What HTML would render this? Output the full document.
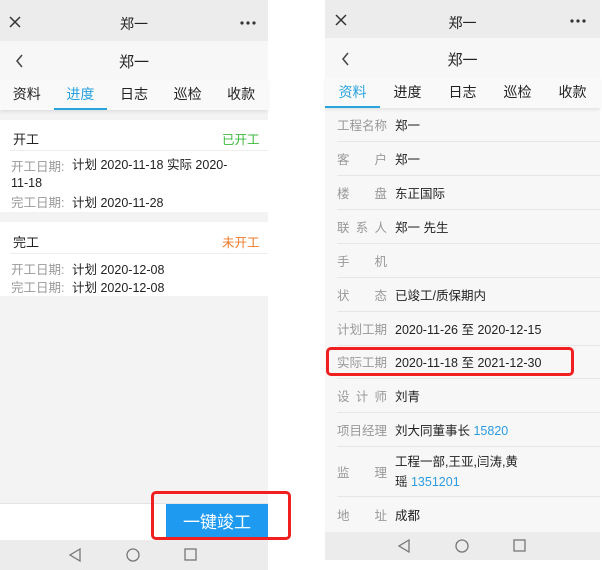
<!DOCTYPE html>
<html><head><meta charset="utf-8"><style>
*{margin:0;padding:0;box-sizing:border-box}
body{width:602px;height:570px;background:#fff;font-family:"Liberation Sans","Noto Sans CJK SC",sans-serif;position:relative;overflow:hidden;color:#222}
.a{position:absolute}
.top{background:#ececec}
.nav{background:#f7f7f7}
.tabs{display:flex;background:#f9f9f9;box-shadow:0 2px 3px rgba(0,0,0,.08)}
.tabs div{flex:1;text-align:center;font-size:14px;line-height:30px;position:relative}
.on{color:#29a3dd}
.on:after{content:"";position:absolute;left:0;right:0;bottom:0;height:2px;background:#29a3dd}
.lbl{color:#999;font-size:12.5px}
.row{position:absolute;left:337px;width:263px;height:34px;border-bottom:1px solid #e6e6e6;font-size:12.5px;display:flex;align-items:center}
.row .l{width:50px;flex:none;color:#999;display:flex;justify-content:space-between;margin-right:8px;white-space:nowrap}
.row .v{color:#222}
.blue{color:#2b9be0}
.dots{font-size:16px;font-weight:bold;letter-spacing:1px;white-space:nowrap}
</style></head><body>
<!-- left phone -->
<div class="a" style="left:0;top:0;width:268px;height:570px;background:#f3f3f3"></div>
<div class="a top" style="left:0;top:0;width:268px;height:41px"></div>
<svg class="a" style="left:9px;top:16px" width="12" height="12"><path d="M1 1L11 11M11 1L1 11" stroke="#333" stroke-width="1.5"/></svg>
<div class="a" style="left:0;top:14px;width:268px;text-align:center;font-size:14px">郑一</div>
<svg class="a" style="left:240px;top:21px" width="20" height="4"><circle cx="2" cy="2" r="1.6" fill="#333"/><circle cx="8" cy="2" r="1.6" fill="#333"/><circle cx="14" cy="2" r="1.6" fill="#333"/></svg>
<div class="a nav" style="left:0;top:41px;width:268px;height:38px"></div>
<svg class="a" style="left:16px;top:54px" width="8" height="14"><path d="M6 1L1 7L6 13" fill="none" stroke="#444" stroke-width="1.5"/></svg>
<div class="a" style="left:0;top:51px;width:268px;text-align:center;font-size:15px">郑一</div>
<div class="a tabs" style="left:0;top:79px;width:268px;height:31px"><div>资料</div><div class="on">进度</div><div>日志</div><div>巡检</div><div>收款</div></div>
<div class="a" style="left:0;top:120px;width:268px;height:92px;background:#fff"></div>
<div class="a" style="left:13px;top:129px;font-size:13px">开工</div>
<div class="a" style="left:222px;top:129px;font-size:12.5px;color:#3cb93c;white-space:nowrap">已开工</div>
<div class="a" style="left:10px;top:150px;width:258px;border-top:1px solid #eee"></div>
<div class="a lbl" style="left:11px;top:156px">开工日期:</div>
<div class="a" style="left:11px;top:156px;width:230px;font-size:12.5px;line-height:18px;text-indent:61px">计划 2020-11-18 实际 2020-11-18</div>
<div class="a lbl" style="left:11px;top:192px">完工日期:</div>
<div class="a" style="left:72px;top:192px;font-size:12.5px">计划 2020-11-28</div>
<div class="a" style="left:0;top:222px;width:268px;height:74px;background:#fff"></div>
<div class="a" style="left:13px;top:232px;font-size:13px">完工</div>
<div class="a" style="left:222px;top:232px;font-size:12.5px;color:#ee7a2a;white-space:nowrap">未开工</div>
<div class="a" style="left:10px;top:253px;width:258px;border-top:1px solid #eee"></div>
<div class="a lbl" style="left:11px;top:259px">开工日期:</div>
<div class="a" style="left:72px;top:259px;font-size:12.5px">计划 2020-12-08</div>
<div class="a lbl" style="left:11px;top:277px">完工日期:</div>
<div class="a" style="left:72px;top:277px;font-size:12.5px">计划 2020-12-08</div>
<div class="a" style="left:0;top:503px;width:268px;height:37px;background:#fff;border-top:1px solid #e3e3e3"></div>
<div class="a" style="left:166px;top:504px;width:102px;height:36px;background:#1e9bf0;color:#fff;font-size:17px;text-align:center;line-height:38px">一键竣工</div>
<div class="a" style="left:151px;top:491px;width:140px;height:49px;border:3px solid #f02020;border-radius:5px"></div>
<div class="a" style="left:0;top:540px;width:268px;height:30px;background:#ececec"></div>
<svg class="a" style="left:0;top:540px" width="268" height="30"><path d="M80 9 L70 15 L80 21Z" fill="none" stroke="#777" stroke-width="1.3"/><circle cx="133" cy="15" r="6" fill="none" stroke="#777" stroke-width="1.3"/><rect x="185" y="9" width="11" height="11" fill="none" stroke="#777" stroke-width="1.3"/></svg>

<!-- right phone -->
<div class="a" style="left:325px;top:0;width:275px;height:532px;background:#f7f7f7"></div>
<div class="a top" style="left:325px;top:0;width:275px;height:38px"></div>
<svg class="a" style="left:335px;top:14px" width="12" height="12"><path d="M1 1L11 11M11 1L1 11" stroke="#333" stroke-width="1.5"/></svg>
<div class="a" style="left:325px;top:13px;width:275px;text-align:center;font-size:14px">郑一</div>
<svg class="a" style="left:570px;top:19px" width="20" height="4"><circle cx="2" cy="2" r="1.6" fill="#333"/><circle cx="8" cy="2" r="1.6" fill="#333"/><circle cx="14" cy="2" r="1.6" fill="#333"/></svg>
<div class="a nav" style="left:325px;top:38px;width:275px;height:40px"></div>
<svg class="a" style="left:342px;top:52px" width="8" height="14"><path d="M6 1L1 7L6 13" fill="none" stroke="#444" stroke-width="1.5"/></svg>
<div class="a" style="left:325px;top:49px;width:275px;text-align:center;font-size:15px">郑一</div>
<div class="a tabs" style="left:325px;top:77px;width:275px;height:31px"><div class="on">资料</div><div>进度</div><div>日志</div><div>巡检</div><div>收款</div></div>
<div class="row" style="top:108px"><span class="l"><span>工程名称</span></span><span class="v">郑一</span></div>
<div class="row" style="top:142px"><span class="l"><span>客</span><span>户</span></span><span class="v">郑一</span></div>
<div class="row" style="top:176px"><span class="l"><span>楼</span><span>盘</span></span><span class="v">东正国际</span></div>
<div class="row" style="top:210px"><span class="l"><span>联</span><span>系</span><span>人</span></span><span class="v">郑一 先生</span></div>
<div class="row" style="top:244px"><span class="l"><span>手</span><span>机</span></span></div>
<div class="row" style="top:278px"><span class="l"><span>状</span><span>态</span></span><span class="v">已竣工/质保期内</span></div>
<div class="row" style="top:312px"><span class="l"><span>计划工期</span></span><span class="v">2020-11-26 至 2020-12-15</span></div>
<div class="row" style="top:345px"><span class="l"><span>实际工期</span></span><span class="v">2020-11-18 至 2021-12-30</span></div>
<div class="row" style="top:379px"><span class="l"><span>设</span><span>计</span><span>师</span></span><span class="v">刘青</span></div>
<div class="row" style="top:413px"><span class="l"><span>项目经理</span></span><span class="v">刘大同董事长 <span class="blue">15820</span></span></div>
<div class="row" style="top:447px;height:50px"><span class="l"><span>监</span><span>理</span></span><span class="v" style="line-height:20px">工程一部,王亚,闫涛,黄<br>瑶 <span class="blue">1351201</span></span></div>
<div class="row" style="top:497px;border:0"><span class="l"><span>地</span><span>址</span></span><span class="v">成都</span></div>
<div class="a" style="left:326px;top:347px;width:248px;height:29px;border:3px solid #f02020;border-radius:5px"></div>
<div class="a" style="left:325px;top:532px;width:275px;height:28px;background:#ececec"></div>
<svg class="a" style="left:325px;top:532px" width="275" height="28"><path d="M84 8 L74 14 L84 20Z" fill="none" stroke="#777" stroke-width="1.3"/><circle cx="137" cy="14" r="6" fill="none" stroke="#777" stroke-width="1.3"/><rect x="189" y="8" width="11" height="11" fill="none" stroke="#777" stroke-width="1.3"/></svg>
</body></html>
